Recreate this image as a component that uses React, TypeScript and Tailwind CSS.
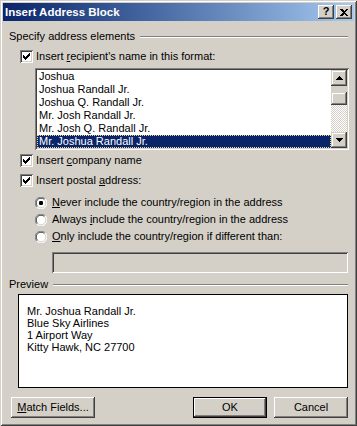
import React from "react";

const FONT = { fontFamily: '"Liberation Sans", Arial, sans-serif' };

function Check() {
  const cols = [2, 3, 4, 3, 2, 1, 0];
  return (
    <span className="inline-block w-[13px] h-[13px] bg-white shadow-[inset_1px_1px_#808080,inset_-1px_-1px_#fff,inset_2px_2px_#404040,inset_-2px_-2px_#d4d0c8] shrink-0">
      <svg width="13" height="13" shapeRendering="crispEdges">
        {cols.map((y, i) => (
          <rect key={i} x={3 + i} y={3 + y} width="1" height="3" fill="#000" />
        ))}
      </svg>
    </span>
  );
}

function Radio({ on }: { on?: boolean }) {
  return (
    <svg width="12" height="12" className="shrink-0">
      <circle cx="6" cy="6" r="5.5" fill="#fff" />
      <path d="M1.8 10.2 A5.5 5.5 0 0 1 10.2 1.8" stroke="#808080" strokeWidth="1" fill="none" />
      <path d="M10.2 1.8 A5.5 5.5 0 0 1 1.8 10.2" stroke="#fff" strokeWidth="1" fill="none" />
      <path d="M2.6 9.4 A4.5 4.5 0 0 1 9.4 2.6" stroke="#404040" strokeWidth="1" fill="none" />
      <path d="M9.4 2.6 A4.5 4.5 0 0 1 2.6 9.4" stroke="#d4d0c8" strokeWidth="1" fill="none" />
      {on && <rect x="4" y="4" width="4" height="4" rx="1.2" fill="#000" />}
    </svg>
  );
}

function GroupLabel({ text }: { text: string }) {
  return (
    <div className="flex items-center h-[13px] leading-[13px]">
      <span className="pl-[1px]">{text}</span>
      <div className="flex-1 ml-[5px] border-t border-t-[#808080] border-b border-b-white" />
    </div>
  );
}

function Btn({ children, def, className }: { children: React.ReactNode; def?: boolean; className?: string }) {
  const inner = (
    <div className="h-full w-full flex items-center justify-center shadow-[inset_-1px_-1px_#404040,inset_1px_1px_#fff,inset_-2px_-2px_#808080,inset_2px_2px_#d4d0c8]">
      {children}
    </div>
  );
  return def ? (
    <div className={"h-[21px] border border-black " + (className || "")}>{inner}</div>
  ) : (
    <div className={"h-[21px] " + (className || "")}>{inner}</div>
  );
}

function ScrollBtn({ down }: { down?: boolean }) {
  return (
    <div className="w-[16px] h-[16px] flex items-center justify-center bg-[#d4d0c8] shadow-[inset_-1px_-1px_#404040,inset_1px_1px_#d4d0c8,inset_-2px_-2px_#808080,inset_2px_2px_#fff]">
      <svg width="7" height="4" shapeRendering="crispEdges">
        {down ? (
          <path d="M0 0 H7 L3.5 4 Z" fill="#000" />
        ) : (
          <path d="M0 4 H7 L3.5 0 Z" fill="#000" />
        )}
      </svg>
    </div>
  );
}

export default function App() {
  const names = [
    "Joshua",
    "Joshua Randall Jr.",
    "Joshua Q. Randall Jr.",
    "Mr. Josh Randall Jr.",
    "Mr. Josh Q. Randall Jr.",
    "Mr. Joshua Randall Jr.",
  ];
  return (
    <div
      style={FONT}
      className="w-[357px] h-[426px] bg-[#d4d0c8] p-[3px] text-[11px] text-black shadow-[inset_1px_1px_#d4d0c8,inset_-1px_-1px_#404040,inset_2px_2px_#fff,inset_-2px_-2px_#808080] flex flex-col"
    >
      {/* Title bar */}
      <div className="h-[18px] bg-linear-to-r from-[#0a246a] to-[#a6caf0] flex items-center pl-[2px] pr-[2px]">
        <span className="text-white font-bold text-[11.5px] leading-[18px] flex-1">Insert Address Block</span>
        <div className="w-[16px] h-[14px] bg-[#d4d0c8] flex items-center justify-center shadow-[inset_-1px_-1px_#404040,inset_1px_1px_#fff,inset_-2px_-2px_#808080] font-bold text-[11px] leading-none pb-[1px]">
          ?
        </div>
        <div className="w-[16px] h-[14px] ml-[2px] bg-[#d4d0c8] flex items-center justify-center shadow-[inset_-1px_-1px_#404040,inset_1px_1px_#fff,inset_-2px_-2px_#808080]">
          <svg width="8" height="7" shapeRendering="crispEdges">
            <path d="M0 0 H2 L4 2 L6 0 H8 L5 3.5 L8 7 H6 L4 5 L2 7 H0 L3 3.5 Z" fill="#000" />
          </svg>
        </div>
      </div>

      {/* Body */}
      <div className="flex flex-col pl-[5px] pr-[6px]">
        <div className="mt-[9px]">
          <GroupLabel text="Specify address elements" />
        </div>

        <div className="mt-[7px] ml-[12px] flex items-center h-[13px] gap-[3px]">
          <Check />
          <span className="leading-[13px]">
            Insert <u>r</u>ecipient's name in this format:
          </span>
        </div>

        <div className="mt-[5px] ml-[27px] mr-[-1px] h-[82px] bg-white p-[2px] shadow-[inset_1px_1px_#808080,inset_-1px_-1px_#fff,inset_2px_2px_#404040,inset_-2px_-2px_#d4d0c8] flex">
          <div className="flex-1 flex flex-col">
            {names.map((n, i) =>
              i === 5 ? (
                <div
                  key={n}
                  className="h-[13px] leading-[11px] pl-[1px] bg-[#0a246a] text-white border border-dotted border-[#e6d98a]"
                >
                  {n}
                </div>
              ) : (
                <div key={n} className="h-[13px] leading-[13px] pl-[2px]">
                  {n}
                </div>
              )
            )}
          </div>
          <div className="w-[16px] flex flex-col">
            <ScrollBtn />
            <div className="h-[6px] bg-[#d4d0c8]" />
            <div className="h-[13px] bg-[#d4d0c8] shadow-[inset_-1px_-1px_#404040,inset_1px_1px_#d4d0c8,inset_-2px_-2px_#808080,inset_2px_2px_#fff]" />
            <div className="flex-1 bg-[conic-gradient(#fff_25%,#d4d0c8_0_50%,#fff_0_75%,#d4d0c8_0)] [background-size:2px_2px]" />
            <ScrollBtn down />
          </div>
        </div>

        <div className="mt-[4px] ml-[12px] flex items-center h-[13px] gap-[3px]">
          <Check />
          <span className="leading-[13px]">
            Insert <u>c</u>ompany name
          </span>
        </div>

        <div className="mt-[7px] ml-[12px] flex items-center h-[13px] gap-[3px]">
          <Check />
          <span className="leading-[13px]">
            Insert postal <u>a</u>ddress:
          </span>
        </div>

        <div className="mt-[9px] ml-[27px] flex items-center h-[13px] gap-[5px]">
          <Radio on />
          <span className="leading-[13px]">
            <u>N</u>ever include the country/region in the address
          </span>
        </div>
        <div className="mt-[4px] ml-[27px] flex items-center h-[13px] gap-[5px]">
          <Radio />
          <span className="leading-[13px]">
            Always <u>i</u>nclude the country/region in the address
          </span>
        </div>
        <div className="mt-[4px] ml-[27px] flex items-center h-[13px] gap-[5px]">
          <Radio />
          <span className="leading-[13px]">
            <u>O</u>nly include the country/region if different than:
          </span>
        </div>

        <div className="mt-[9px] ml-[44px] h-[21px] bg-[#d4d0c8] shadow-[inset_1px_1px_#808080,inset_-1px_-1px_#fff,inset_2px_2px_#404040,inset_-2px_-2px_#d4d0c8]" />

        <div className="mt-[5px]">
          <GroupLabel text="Preview" />
        </div>

        <div className="mt-[3px] ml-[10px] h-[94px] bg-white pt-[10px] pl-[8px] border border-black">
          <div className="leading-[12px]">Mr. Joshua Randall Jr.</div>
          <div className="leading-[12px]">Blue Sky Airlines</div>
          <div className="leading-[12px]">1 Airport Way</div>
          <div className="leading-[12px]">Kitty Hawk, NC 27700</div>
        </div>

        <div className="mt-[9px] flex">
          <Btn className="ml-[3px] w-[84px]">
            <span>
              <u>M</u>atch Fields...
            </span>
          </Btn>
          <div className="flex-1" />
          <Btn def className="w-[74px]">
            OK
          </Btn>
          <Btn className="ml-[7px] w-[74px]">Cancel</Btn>
        </div>
      </div>
    </div>
  );
}
